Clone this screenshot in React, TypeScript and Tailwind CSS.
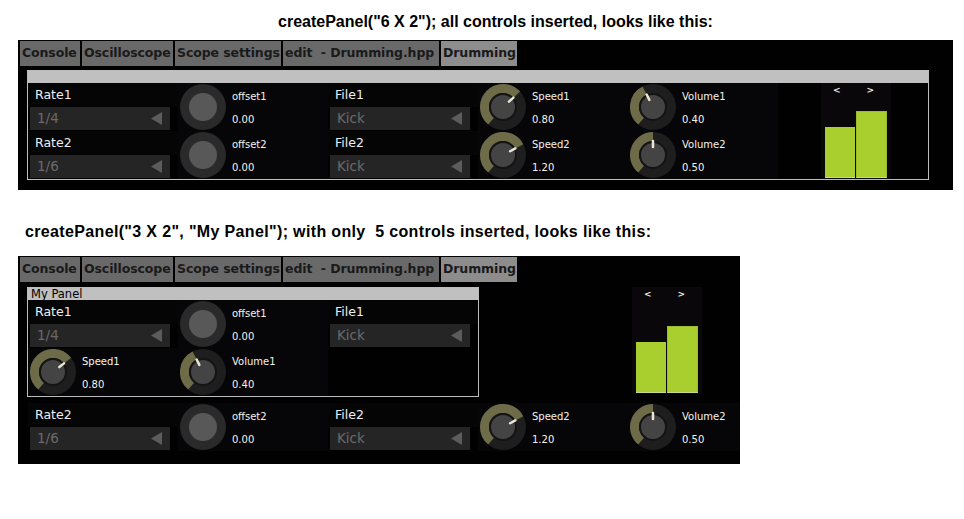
import { FC } from 'react';

const ui = { fontFamily: '"DejaVu Sans", Verdana, sans-serif' };
const title = { fontFamily: '"Liberation Sans", Arial, sans-serif' };

const polar = (r: number, deg: number) => {
  const a = (deg * Math.PI) / 180;
  return [23 + r * Math.sin(a), 23 - r * Math.cos(a)];
};

const Knob: FC<{ angle?: number }> = ({ angle }) => {
  if (angle === undefined) {
    return (
      <svg width="46" height="46" viewBox="0 0 46 46" className="shrink-0">
        <circle cx="23" cy="23" r="23" fill="#2a2a2a" />
        <circle cx="23" cy="23" r="14" fill="#585858" />
      </svg>
    );
  }
  const [sx, sy] = polar(18.5, -140);
  const [ex, ey] = polar(18.5, angle);
  const large = angle + 140 > 180 ? 1 : 0;
  const [p1x, p1y] = polar(8, angle);
  const [p2x, p2y] = polar(14, angle);
  return (
    <svg width="46" height="46" viewBox="0 0 46 46" className="shrink-0">
      <circle cx="23" cy="23" r="23" fill="#1e1e1e" />
      <path
        d={`M ${sx} ${sy} A 18.5 18.5 0 ${large} 1 ${ex} ${ey}`}
        fill="none"
        stroke="#6e6c48"
        strokeWidth="9"
      />
      <circle cx="23" cy="23" r="13" fill="#444" stroke="#141414" strokeWidth="2" />
      <line x1={p1x} y1={p1y} x2={p2x} y2={p2y} stroke="#e9e7d2" strokeWidth="2.5" strokeLinecap="round" />
    </svg>
  );
};

const ComboCell: FC<{ label: string; value: string }> = ({ label, value }) => (
  <div className="flex h-[48px] flex-col" style={ui}>
    <div className="flex h-[24px] items-center bg-[#050505] pl-[7px] text-[12.5px] text-[#eeeeee]">{label}</div>
    <div className="ml-[2px] flex h-[23px] w-[140px] items-center justify-between bg-[#252525] pl-[7px] pr-[8px] text-[13.5px] text-[#6a6a6a]">
      <span>{value}</span>
      <svg width="11" height="13" viewBox="0 0 11 13">
        <polygon points="11,0 11,13 0,6.5" fill="#5c5c5c" />
      </svg>
    </div>
  </div>
);

const KnobCell: FC<{ label: string; value: string; angle?: number }> = ({ label, value, angle }) => (
  <div className="flex h-[48px] items-center bg-[#060508]" style={ui}>
    <div className="ml-[2px]">
      <Knob angle={angle} />
    </div>
    <div className="ml-[6px] flex h-full flex-col gap-[9px] pt-[7px] text-[10px] leading-[14px] text-[#f6f4ea]">
      <span>{label}</span>
      <span>{value}</span>
    </div>
  </div>
);

const Bars: FC = () => (
  <div className="flex h-full w-[70px] flex-col bg-[#0a070b] px-[4px] pb-[1px]" style={ui}>
    <div className="flex h-[16px] items-center gap-[26px] pl-[8px] text-[9px] font-bold text-[#eeeee0]">
      <span>&lt;</span>
      <span>&gt;</span>
    </div>
    <div className="mt-auto flex items-end gap-[1px]">
      <div className="h-[51px] w-[31px] border-b border-[#c9d79a] bg-[#a8cf2e]" />
      <div className="h-[67px] w-[32px] border border-b border-[#9dbb2c] border-b-[#c9d79a] bg-[#a8cf2e]" />
    </div>
  </div>
);

const tabs = [
  { name: 'Console', w: 'w-[60px]', active: false },
  { name: 'Oscilloscope', w: 'w-[91px]', active: false },
  { name: 'Scope settings', w: 'w-[106px]', active: false },
  { name: 'edit  - Drumming.hpp', w: 'w-[156px]', active: false },
  { name: 'Drumming', w: 'w-[76px]', active: true },
];

const TabBar: FC = () => (
  <div className="flex h-[26px] gap-[2px] pl-[2px] pt-[1px]" style={ui}>
    {tabs.map((t) => (
      <div
        key={t.name}
        className={`flex h-[25px] items-center overflow-hidden whitespace-pre pl-[2px] text-[12.5px] font-bold tracking-[-0.1px] text-[#1a1a1a] ${t.w} ${
          t.active ? 'bg-[#8d8d8d]' : 'bg-[#696969]'
        }`}
      >
        {t.name}
      </div>
    ))}
  </div>
);

export default function App() {
  return (
    <div className="h-[519px] w-[964px] overflow-hidden bg-white">
      <p className="pl-[278px] pt-[12px] text-[16px] font-bold leading-[20px] text-black" style={title}>
        createPanel("6 X 2"); all controls inserted, looks like this:
      </p>

      <div className="ml-[18px] mt-[8px] h-[150px] w-[935px] bg-[#020102]">
        <TabBar />
        <div className="ml-[9px] mt-[4px] w-[902px] border border-[#bdbdbd]">
          <div className="h-[12px] bg-[#c0c0c0]" />
          <div className="grid grid-cols-[repeat(6,150px)] grid-rows-[48px_48px] bg-[#020102]">
            <ComboCell label="Rate1" value="1/4" />
            <KnobCell label="offset1" value="0.00" />
            <ComboCell label="File1" value="Kick" />
            <KnobCell label="Speed1" value="0.80" angle={48} />
            <KnobCell label="Volume1" value="0.40" angle={-27} />
            <div className="row-span-2 flex justify-center pl-[6px]">
              <Bars />
            </div>
            <ComboCell label="Rate2" value="1/6" />
            <KnobCell label="offset2" value="0.00" />
            <ComboCell label="File2" value="Kick" />
            <KnobCell label="Speed2" value="1.20" angle={62} />
            <KnobCell label="Volume2" value="0.50" angle={0} />
          </div>
        </div>
      </div>

      <p
        className="whitespace-pre pl-[25px] pt-[32px] text-[16px] font-bold leading-[20px] tracking-[0.35px] text-black"
        style={title}
      >
        createPanel("3 X 2", "My Panel"); with only  5 controls inserted, looks like this:
      </p>

      <div className="ml-[18px] mt-[14px] h-[208px] w-[722px] overflow-hidden bg-[#020102]">
        <TabBar />
        <div className="mt-[5px] flex">
          <div className="ml-[9px] w-[452px] border border-[#bdbdbd]">
            <div className="h-[12px] bg-[#c0c0c0] pl-[3px] text-[11.5px] leading-[12px] text-black" style={ui}>
              My Panel
            </div>
            <div className="grid grid-cols-[repeat(3,150px)] grid-rows-[48px_48px] bg-[#020102]">
              <ComboCell label="Rate1" value="1/4" />
              <KnobCell label="offset1" value="0.00" />
              <ComboCell label="File1" value="Kick" />
              <KnobCell label="Speed1" value="0.80" angle={52} />
              <KnobCell label="Volume1" value="0.40" angle={-27} />
              <div />
            </div>
          </div>
          <div className="ml-[153px] h-[107px]">
            <Bars />
          </div>
        </div>
        <div className="ml-[10px] mt-[6px] grid grid-cols-[repeat(5,150px)] grid-rows-[48px]">
          <ComboCell label="Rate2" value="1/6" />
          <KnobCell label="offset2" value="0.00" />
          <ComboCell label="File2" value="Kick" />
          <KnobCell label="Speed2" value="1.20" angle={62} />
          <KnobCell label="Volume2" value="0.50" angle={0} />
        </div>
      </div>
    </div>
  );
}
